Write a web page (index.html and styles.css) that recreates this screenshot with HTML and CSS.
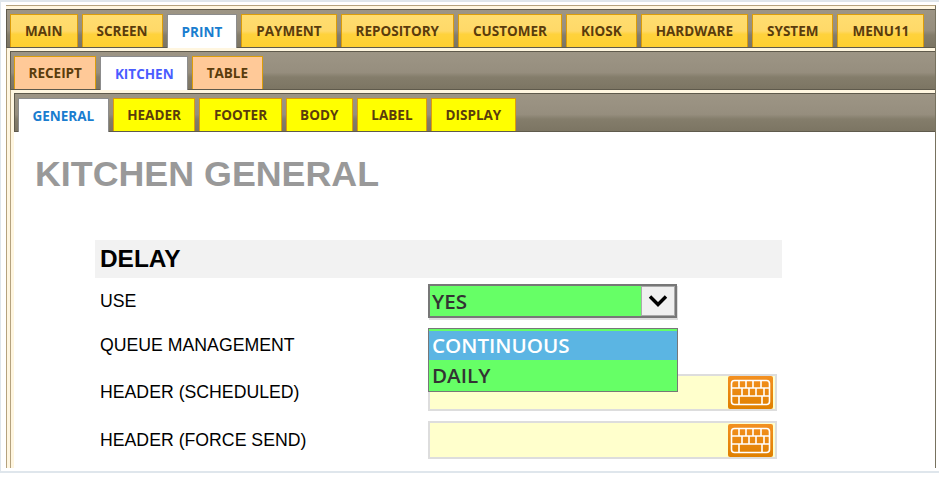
FILE: index.html
```html
<!DOCTYPE html>
<html lang="en">
<head>
  <meta charset="UTF-8" />
  <title>Kitchen General</title>
  <link rel="stylesheet" href="styles.css">
</head>
<body>
  <div class="shot">
    <div class="frame">
      <div class="bar">
        <a class="tab gold">MAIN</a>
        <a class="tab gold">SCREEN</a>
        <a class="tab on blue">PRINT</a>
        <a class="tab gold">PAYMENT</a>
        <a class="tab gold">REPOSITORY</a>
        <a class="tab gold">CUSTOMER</a>
        <a class="tab gold">KIOSK</a>
        <a class="tab gold">HARDWARE</a>
        <a class="tab gold">SYSTEM</a>
        <a class="tab gold">MENU11</a>
      </div>
      <div class="panel">
        <div class="bar">
          <a class="tab peach">RECEIPT</a>
          <a class="tab on violet">KITCHEN</a>
          <a class="tab peach">TABLE</a>
        </div>
        <div class="panel">
          <div class="bar">
            <a class="tab on blue">GENERAL</a>
            <a class="tab lemon">HEADER</a>
            <a class="tab lemon">FOOTER</a>
            <a class="tab lemon">BODY</a>
            <a class="tab lemon">LABEL</a>
            <a class="tab lemon">DISPLAY</a>
          </div>
          <div class="content">
            <h1>KITCHEN GENERAL</h1>
            <div class="group">
              <h2>DELAY</h2>
              <div class="form">
                <label>USE</label>
                <div class="select">
                  <span class="value">YES</span>
                  <span class="arrow">
                    <svg width="22" height="14" viewBox="0 0 22 14"><path d="M3 2.5l8 8 8-8" fill="none" stroke="#000" stroke-width="3.4"/></svg>
                  </span>
                </div>
                <label class="tall">QUEUE MANAGEMENT</label>
                <div class="picker">
                  <ul class="list">
                    <li class="hover">CONTINUOUS</li>
                    <li>DAILY</li>
                  </ul>
                </div>
                <label>HEADER (SCHEDULED)</label>
                <div class="field">
                  <span class="kbd">
                    <svg width="41" height="29" viewBox="0 0 41 29"><use href="#keys"/></svg>
                  </span>
                </div>
                <label>HEADER (FORCE SEND)</label>
                <div class="field">
                  <span class="kbd">
                    <svg width="41" height="29" viewBox="0 0 41 29"><use href="#keys"/></svg>
                  </span>
                </div>
              </div>
            </div>
          </div>
        </div>
      </div>
    </div>
  </div>

  <svg width="0" height="0" class="defs">
    <g id="keys" fill="none" stroke="#fff" stroke-width="1.6">
      <rect x="1.5" y="2.5" width="38" height="24" rx="3"/>
      <path d="M2 10h37M2 18h37M9 3v7M16 3v7M23 3v7M31 3v7M12 10v8M19 10v8M26 10v8M34 10v8M9 18v8M32 18v8"/>
    </g>
  </svg>
</body>
</html>
```

FILE: styles.css
```css
* {
  margin: 0; padding: 0; box-sizing: border-box;
}
body {
  background: #fff;
  font-family: 'Liberation Sans', Arial, sans-serif;
  overflow: hidden;
}
.defs {
  display: block;
  height: 0;
}
.shot {
  height: 473px;
  padding: 3px 0 3px 5px;
  border-top: 2px solid #dfe6ec;
  border-left: 1px solid #dfe6ec;
  border-bottom: 2px solid #dfe6ec;
}
.frame {
  width: 930px;
  height: 463px;
  overflow: hidden;
  padding-top: 3px;
  background: #fff6e0;
  border-top: 1px solid #b5a27e;
  border-right: 1px solid #77725f;
}
.bar {
  display: flex;
  gap: 4px;
  height: 39px;
  padding: 4px 0 0 3px;
  background: linear-gradient(to bottom, #9d9585, #968e7e 55%, #847d6b 68%, #7c7563);
  border-top: 1px solid #5f5a4c;
  border-left: 1px solid #5f5a4c;
  border-bottom: 1px solid #5f5a4c;
}
.panel {
  padding: 3px 0 0 3px;
  border-left: 1px solid #b5a27e;
}
.tab {
  display: flex;
  align-items: center;
  height: 33px;
  padding: 0 14px;
  font-family: 'Open Sans', sans-serif;
  font-size: 13.5px;
  font-weight: 700;
  color: #5a3c0c;
  border: 1px solid #dc9d0a;
  border-bottom: none;
}
.panel .tab {
  padding: 0 13.5px;
}
.gold {
  background: linear-gradient(to bottom, #ffdd70, #ffd968 50%, #ffd23c 60%, #ffd030);
}
.peach {
  background: #ffc998;
}
.lemon {
  background: #ffff00;
}
.tab.on {
  height: 34px;
  background: #fff;
  border-color: #8c8c8c;
}
.tab.blue {
  color: #1a7dcf;
}
.tab.violet {
  color: #4a5cff;
}
.content {
  height: 340px;
  background: #fff;
  padding: 24px 0 0 21px;
}
h1 {
  font-size: 35.8px;
  line-height: 36px;
  font-weight: 700;
  color: #999;
}
.group {
  width: 687px;
  margin: 48px 0 0 60px;
}
h2 {
  height: 38px;
  padding-left: 5px;
  font-size: 24.4px;
  line-height: 38px;
  font-weight: 700;
  color: #000;
  background: #f2f2f2;
}
.form {
  display: grid;
  grid-template-columns: 333px 349px;
  grid-template-rows: 34px 36px 37px 38px;
  row-gap: 10px;
  padding-top: 6px;
}
label {
  display: flex;
  align-items: center;
  padding-left: 5px;
  font-size: 17.7px;
  color: #000;
}
label.tall {
  padding-bottom: 2px;
}
.select {
  display: flex;
  width: 249px;
  border: 2px solid #777;
  box-shadow: 1px 2px 0 #ddd;
  background: #66ff66;
}
.value {
  flex: 1;
  padding-left: 2px;
  font-family: 'Open Sans', sans-serif;
  font-size: 20.6px;
  font-weight: 600;
  line-height: 31px;
  color: #333;
}
.arrow {
  display: flex;
  align-items: center;
  justify-content: center;
  width: 34px;
  background: #f0f0f0;
  border: 1px solid #aaa;
}
.picker {
  position: relative;
  z-index: 2;
}
.list {
  position: absolute;
  top: 0;
  left: 0;
  width: 250px;
  padding-top: 2px;
  list-style: none;
  background: #66ff66;
  border: 1px solid #777;
}
.list li {
  height: 31px;
  padding-left: 3px;
  font-family: 'Open Sans', sans-serif;
  font-size: 20.6px;
  font-weight: 600;
  line-height: 31px;
  color: #333;
}
.list .hover {
  height: 29px;
  line-height: 29px;
  color: #fff;
  background: #5bb5e3;
}
.field {
  display: flex;
  justify-content: flex-end;
  align-items: center;
  padding-right: 2px;
  background: #ffffcc;
  border: 2px solid #ddd;
}
.kbd {
  display: flex;
  align-items: center;
  justify-content: center;
  width: 45px;
  height: 33px;
  border-radius: 2px;
  background: linear-gradient(to bottom, #f39020, #e08000);
}
```
